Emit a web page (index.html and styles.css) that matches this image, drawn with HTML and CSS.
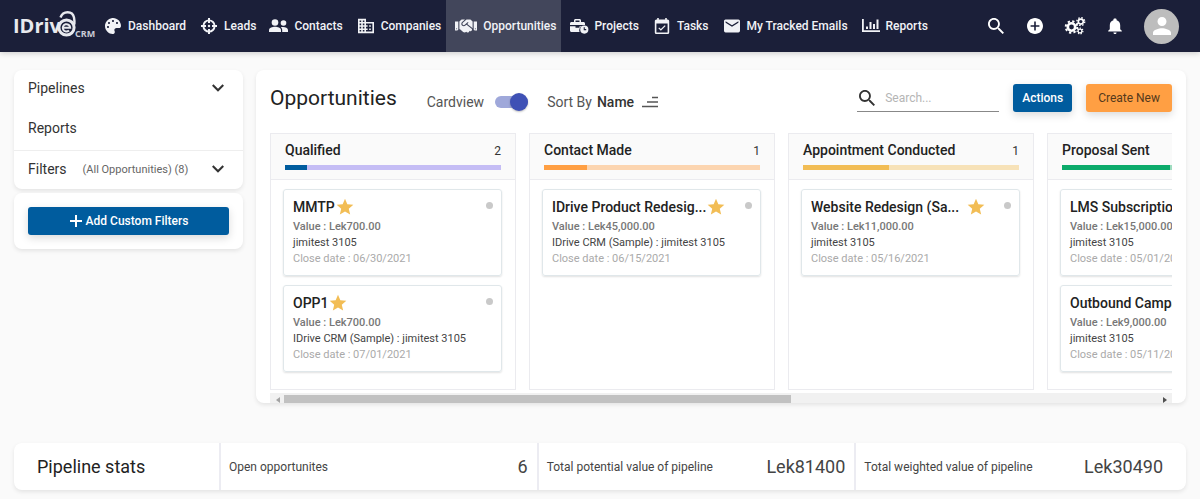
FILE: index.html
```html
<!DOCTYPE html>
<html lang="en">
<head>
<meta charset="utf-8">
<meta name="viewport" content="width=device-width, initial-scale=1">
<title>Opportunities - IDrive CRM</title>
<link rel="stylesheet" href="styles.css">
</head>
<body>
<svg class="defs" aria-hidden="true">
  <symbol id="chevron" viewBox="0 0 12 12"><path d="M1.500 3.500 6 8l4.500-4.500" fill="none" stroke="currentColor" stroke-width="1.800"/></symbol>
  <symbol id="star" viewBox="0 0 24 24"><path d="M12 17.270 18.180 21l-1.640-7.030L22 9.240l-7.190-.61L12 2 9.190 8.630 2 9.240l5.460 4.730L5.820 21z"/></symbol>
  <symbol id="search" viewBox="3 3 17.500 17.500"><path d="M15.500 14h-.79l-.28-.27C15.410 12.590 16 11.110 16 9.500 16 5.910 13.090 3 9.500 3S3 5.910 3 9.500 5.910 16 9.500 16c1.610 0 3.090-.59 4.230-1.570l.27.28v.79l5 4.990L20.490 19l-4.990-5zm-6 0C7.010 14 5 11.990 5 9.500S7.010 5 9.500 5 14 7.010 14 9.500 11.990 14 9.500 14z"/></symbol>
</svg>

<header class="topbar">
  <a class="logo" href="#" aria-label="IDrive CRM">
    <svg width="84" height="32" viewBox="0 0 84 32">
      <text class="logo-name" x="-1" y="24">IDriv</text>
      <path d="M46.500 8.500C49 1.500 58.500 1.500 60 8.500c.5 2.500.6 4 .4 7" fill="none" stroke="#e8e9ee" stroke-width="2.400"/>
      <circle cx="52.500" cy="18.500" r="7.600" fill="none" stroke="#e8e9ee" stroke-width="3"/>
      <path d="M49 18.700h7.200a3.700 3.700 0 1 0-1.200 2.900" fill="none" stroke="#e8e9ee" stroke-width="2"/>
      <text class="logo-crm" x="61" y="28">CRM</text>
    </svg>
  </a>
  <nav class="nav" aria-label="Main">
    <a href="#"><svg class="icon" viewBox="0 0 512 512"><path d="M204.300 5C104.900 24.400 24.800 104.300 5.200 203.400c-37 187 131.700 326.400 258.800 306.700 41.200-6.400 61.400-54.600 42.500-91.700-23.100-45.400 9.900-98.400 60.900-98.400h79.700c35.800 0 64.800-29.600 64.900-65.300C511.500 97.100 368.100-26.900 204.300 5zM96 320c-17.700 0-32-14.300-32-32s14.300-32 32-32 32 14.300 32 32-14.300 32-32 32zm32-128c-17.700 0-32-14.300-32-32s14.300-32 32-32 32 14.300 32 32-14.300 32-32 32zm128-64c-17.700 0-32-14.300-32-32s14.300-32 32-32 32 14.300 32 32-14.300 32-32 32zm128 64c-17.700 0-32-14.300-32-32s14.300-32 32-32 32 14.300 32 32-14.300 32-32 32z"/></svg>Dashboard</a>
    <a href="#"><svg class="icon" viewBox="0 0 16 16"><circle cx="8" cy="8" r="5.600" fill="none" stroke="currentColor" stroke-width="1.900"/><path d="M7 0h2v5H7zM7 11h2v5H7zM0 7h5v2H0zM11 7h5v2h-5z"/><circle cx="8" cy="8" r="1.200"/></svg>Leads</a>
    <a href="#"><svg class="icon wide" viewBox="0 0 20 16"><circle cx="6" cy="4.500" r="3.300"/><path d="M0 14v-1.800C0 9.600 3.500 8.800 6 8.800s6 .8 6 3.400V14z"/><circle cx="14.500" cy="5" r="2.800"/><path d="M13.200 14v-1.800c0-1.300-.6-2.300-1.500-3 3-.8 7.300.1 7.300 2.700V14z"/></svg>Contacts</a>
    <a href="#"><svg class="icon" viewBox="2 2 20 20"><path d="M12 7V3H2v18h20V7H12zM6 19H4v-2h2v2zm0-4H4v-2h2v2zm0-4H4V9h2v2zm0-4H4V5h2v2zm4 12H8v-2h2v2zm0-4H8v-2h2v2zm0-4H8V9h2v2zm0-4H8V5h2v2zm10 12h-8v-2h2v-2h-2v-2h2v-2h-2V9h8v10zm-2-8h-2v2h2v-2zm0 4h-2v2h2v-2z"/></svg>Companies</a>
    <a href="#" class="active" aria-current="page"><svg class="icon hands" viewBox="0 0 640 512"><path d="M434.700 64h-85.900c-8 0-15.700 3-21.600 8.400l-98.300 90c-.1.1-.2.3-.3.4-16.600 15.600-16.300 40.500-2.100 56 12.700 13.900 39.400 17.600 56.100 2.700.1-.1.3-.1.4-.2l79.900-73.200c6.500-5.900 16.700-5.500 22.600 1 6 6.500 5.500 16.600-1 22.600l-26.100 23.900L504 313.800c2.900 2.400 5.500 5 7.900 7.700V128l-54.600-54.600c-5.900-6-14.100-9.400-22.600-9.400zM544 128.200v223.900c0 17.700 14.300 32 32 32h64V128.200h-96zm48 223.900c-8.800 0-16-7.200-16-16s7.200-16 16-16 16 7.200 16 16-7.200 16-16 16zM0 384h64c17.700 0 32-14.300 32-32V128.200H0V384zm48-63.900c8.800 0 16 7.200 16 16s-7.200 16-16 16-16-7.200-16-16c0-8.900 7.200-16 16-16zm435.900 18.600L334.600 217.500l-30 27.500c-29.700 27.100-75.200 24.500-101.700-4.400-26.900-29.400-24.800-74.900 4.400-101.700L289.100 64h-83.800c-8.500 0-16.600 3.400-22.600 9.400L128 128v223.900h18.300l90.500 81.900c27.400 22.300 67.700 18.100 90-9.300l.2-.2 17.900 15.500c15.900 13 39.400 10.500 52.300-5.400l31.400-38.600 5.400 4.400c13.700 11.100 33.900 9.100 45-4.700l9.500-11.700c11.200-13.800 9.100-33.900-4.600-45.100z"/></svg>Opportunities</a>
    <a href="#"><svg class="icon wide" viewBox="0 0 20 16"><path d="M5 4V2.500C5 1.700 5.700 1 6.500 1h4c.8 0 1.500.7 1.500 1.500V4h2.500c.8 0 1.500.7 1.500 1.500V7H1V5.500C1 4.700 1.700 4 2.500 4zm1.500 0h4V2.500h-4zM1 8.200h5.500v1.500h4V8.200h2.200A5 5 0 0 0 10.500 14h-8C1.700 14 1 13.300 1 12.500z"/><path fill-rule="evenodd" d="M15.300 7.500a4.100 4.100 0 1 1 0 8.200 4.100 4.100 0 0 1 0-8.200zm-.6 1.700v3h2.500v-1.100h-1.400V9.200z"/></svg>Projects</a>
    <a href="#"><svg class="icon" viewBox="2 1 20 20"><path d="M16.530 11.060 15.470 10l-4.880 4.880-2.120-2.120-1.060 1.060L10.590 17l5.940-5.940zM19 3h-1V1h-2v2H8V1H6v2H5c-1.110 0-1.990.9-1.990 2L3 19c0 1.100.89 2 2 2h14c1.100 0 2-.9 2-2V5c0-1.100-.9-2-2-2zm0 16H5V8h14v11z"/></svg>Tasks</a>
    <a href="#"><svg class="icon" viewBox="2 2 20 20"><path d="M20 4H4c-1.100 0-1.990.9-1.990 2L2 18c0 1.100.9 2 2 2h16c1.100 0 2-.9 2-2V6c0-1.100-.9-2-2-2zm0 4-8 5-8-5V6l8 5 8-5v2z"/></svg>My Tracked Emails</a>
    <a href="#"><svg class="icon wide" viewBox="0 0 20 16"><path d="M1 1h1.800v11.200H19V14H1zM5 8.500h2V11H5zM8.500 4h2v7h-2zM12 6h2v5h-2zM15.500 1.500h2V11h-2z"/></svg>Reports</a>
  </nav>
  <div class="tools">
    <button aria-label="Search"><svg class="icon"><use href="#search"/></svg></button>
    <button aria-label="Add"><svg class="icon" viewBox="2 2 20 20"><path d="M12 2C6.480 2 2 6.480 2 12s4.480 10 10 10 10-4.480 10-10S17.520 2 12 2zm5.500 11H13v4.500h-2V13H6.500v-2H11V6.500h2V11h4.500z"/></svg></button>
    <button aria-label="Settings"><svg class="gears" viewBox="0 0 22 18" stroke="currentColor"><circle cx="7.500" cy="10" r="3.700" stroke-width="2.600"/><circle cx="7.500" cy="10" r="5.800" stroke-width="2" stroke-dasharray="2.280 2.275"/><circle cx="16.800" cy="4.600" r="2.500" stroke-width="1.600"/><circle cx="16.800" cy="4.600" r="3.900" stroke-width="1.400" stroke-dasharray="1.540 1.523"/><circle cx="16" cy="14" r="1.900" stroke-width="1.200"/><circle cx="16" cy="14" r="2.900" stroke-width="1.200" stroke-dasharray="1.300 1.303"/></svg></button>
    <button aria-label="Notifications"><svg class="icon bell" viewBox="3 2 18 20"><path d="M12 22c1.100 0 2-.9 2-2h-4c0 1.100.89 2 2 2zm6.500-6v-5c0-3.070-1.640-5.640-4.500-6.320V4c0-.83-.67-1.500-1.500-1.500h-1C10.670 2.500 10 3.170 10 4v.68C7.130 5.360 5.500 7.920 5.500 11v5l-2 2v1h17v-1z"/></svg></button>
    <button class="avatar" aria-label="Account"><svg viewBox="4 4 16 16"><path d="M12 12c2.210 0 4-1.790 4-4s-1.790-4-4-4-4 1.790-4 4 1.790 4 4 4zm0 2c-2.670 0-8 1.340-8 4v2h16v-2c0-2.660-5.330-4-8-4z"/></svg></button>
  </div>
</header>

<main class="page">
  <div class="workspace">
    <aside class="sidebar">
      <section class="panel side-menu">
        <button class="side-item">Pipelines <svg class="chevron"><use href="#chevron"/></svg></button>
        <button class="side-item">Reports</button>
        <button class="side-item filters">Filters <small>(All Opportunities) (8)</small><svg class="chevron"><use href="#chevron"/></svg></button>
      </section>
      <section class="panel side-action">
        <button class="btn primary full"><svg class="plus" viewBox="0 0 14 14"><path d="M6 1h2v5h5v2H8v5H6V8H1V6h5z"/></svg>Add Custom Filters</button>
      </section>
    </aside>

    <section class="panel board-panel">
      <div class="board-bar">
        <h1>Opportunities</h1>
        <label class="switch">Cardview <input type="checkbox" role="switch" checked></label>
        <button class="sort">Sort By <b>Name</b><svg viewBox="0 0 16 12"><path d="M10 1.500h6M5 6h11M0 10.500h16" stroke="currentColor" stroke-width="1.600"/></svg></button>
        <label class="search"><svg aria-label="Search"><use href="#search"/></svg><input type="text" placeholder="Search..."></label>
        <button class="btn primary">Actions</button>
        <button class="btn accent">Create New</button>
      </div>

      <div class="board">
        <section class="column">
          <header class="column-head"><h2>Qualified</h2><span>2</span><div class="meter blue"><i style="width:10%"></i></div></header>
          <article class="card"><h3><span>MMTP</span><svg><use href="#star"/></svg></h3><p class="value">Value : Lek700.00</p><p>jimitest 3105</p><p class="date">Close date : 06/30/2021</p></article>
          <article class="card"><h3><span>OPP1</span><svg><use href="#star"/></svg></h3><p class="value">Value : Lek700.00</p><p>IDrive CRM (Sample) : jimitest 3105</p><p class="date">Close date : 07/01/2021</p></article>
        </section>
        <section class="column">
          <header class="column-head"><h2>Contact Made</h2><span>1</span><div class="meter orange"><i style="width:20%"></i></div></header>
          <article class="card"><h3><span>IDrive Product Redesig...</span><svg><use href="#star"/></svg></h3><p class="value">Value : Lek45,000.00</p><p>IDrive CRM (Sample) : jimitest 3105</p><p class="date">Close date : 06/15/2021</p></article>
        </section>
        <section class="column">
          <header class="column-head"><h2>Appointment Conducted</h2><span>1</span><div class="meter yellow"><i style="width:40%"></i></div></header>
          <article class="card"><h3><span class="long">Website Redesign (Sa...</span><svg><use href="#star"/></svg></h3><p class="value">Value : Lek11,000.00</p><p>jimitest 3105</p><p class="date">Close date : 05/16/2021</p></article>
        </section>
        <section class="column">
          <header class="column-head"><h2>Proposal Sent</h2><span>2</span><div class="meter green"><i style="width:50%"></i></div></header>
          <article class="card"><h3><span>LMS Subscription</span></h3><p class="value">Value : Lek15,000.00</p><p>jimitest 3105</p><p class="date">Close date : 05/01/2021</p></article>
          <article class="card"><h3><span>Outbound Campaign</span></h3><p class="value">Value : Lek9,000.00</p><p>jimitest 3105</p><p class="date">Close date : 05/11/2021</p></article>
        </section>
      </div>
      <div class="scrollbar" aria-hidden="true">
        <svg class="arrow off" viewBox="0 0 14 10"><path d="M10 4v6L6 7z"/></svg>
        <div class="track"><i style="width:58%"></i></div>
        <svg class="arrow" viewBox="0 0 14 10"><path d="M5 4v6l4-3z"/></svg>
      </div>
    </section>
  </div>

  <section class="panel stats">
    <h2>Pipeline stats</h2>
    <div class="stat">Open opportunites <strong>6</strong></div>
    <div class="stat">Total potential value of pipeline <strong>Lek81400</strong></div>
    <div class="stat last">Total weighted value of pipeline <strong>Lek30490</strong></div>
  </section>
</main>
</body>
</html>
```
FILE: styles.css
```css
* { box-sizing: border-box; }
body {
  margin: 0;
  background: #fafafa;
  color: #333;
  font-family: Roboto, "Liberation Sans", sans-serif;
  font-size: 14px;
}
h1, h2, h3, p { margin: 0; font-weight: 400; }
button, input { font: inherit; color: inherit; }
button { border: 0; padding: 0; background: none; cursor: pointer; }
svg { fill: currentColor; flex: none; }
.defs { display: none; }

/* Top bar */
.topbar {
  display: flex;
  align-items: center;
  height: 52px;
  padding: 0 21px 0 14px;
  background: #1b1f39;
  color: #fff;
  box-shadow: 0 1px 6px rgba(0, 0, 0, .2);
}
.logo { display: flex; width: 81px; height: 34px; flex: none; }
.logo svg { overflow: visible; }
.logo-name { font: 700 20px "Open Sans", sans-serif; fill: #e8e9ee; }
.logo-crm { font: 700 9px "Open Sans", sans-serif; fill: #c8cad6; }
.nav { display: flex; height: 100%; }
.nav a {
  display: flex;
  align-items: center;
  gap: 5px;
  padding: 0 5px 0 8px;
  color: #f1f2f6;
  font-size: 12px;
  font-weight: 500;
  text-decoration: none;
  white-space: nowrap;
}
.nav .active { background: #42465b; }
.icon { width: 16px; height: 16px; margin: 0 2px; }
.icon.wide { width: 20px; margin: 0; }
.icon.hands { width: 22px; height: 18px; margin: 0 1px; }
.tools { display: flex; align-items: center; gap: 19px; margin-left: auto; }
.tools button { display: flex; }
.gears { width: 22px; height: 18px; fill: none; }
.tools .avatar {
  align-items: center;
  justify-content: center;
  width: 35px;
  height: 35px;
  border-radius: 50%;
  background: #bdbdbd;
}
.avatar svg { width: 18px; height: 18px; }

/* Page layout */
.page { padding: 18px 14px 9px; }
.workspace { display: flex; align-items: flex-start; gap: 13px; margin-bottom: 40px; }
.panel {
  background: #fff;
  border-radius: 8px;
  box-shadow: 0 2px 4px rgba(0, 0, 0, .09);
}

/* Sidebar */
.sidebar { flex: 0 0 229px; }
.side-menu { margin-bottom: 4px; }
.side-item {
  display: flex;
  align-items: center;
  width: 100%;
  height: 40px;
  padding: 0 18px 4px 14px;
  text-align: left;
}
.side-item.filters { height: 39px; border-top: 1px solid #eee; padding-bottom: 2px; }
.side-item small { margin-left: 16px; font-size: 11px; color: #666; }
.chevron { width: 14px; height: 14px; margin-left: auto; }
.side-action { padding: 14px; }

.btn {
  display: flex;
  align-items: center;
  justify-content: center;
  height: 28px;
  padding: 0 9px;
  border-radius: 3px;
  font-size: 12px;
  font-weight: 500;
  white-space: nowrap;
  box-shadow: 0 3px 8px rgba(0, 0, 0, .15);
}
.btn.primary { background: #005c9e; color: #fff; }
.btn.accent { margin-left: 14px; padding: 0 12px; background: #ff9f43; color: #54391c; font-weight: 400; }
.btn.full { width: 100%; }
.plus { width: 14px; height: 14px; margin-right: 3px; }

/* Board */
.board-panel { flex: 1; min-width: 0; padding: 14px 14px 0; overflow: hidden; }
.board-bar { display: flex; align-items: center; height: 28px; margin-bottom: 21px; white-space: nowrap; }
.board-bar h1 { margin-right: 30px; font-size: 21px; color: #222; }
.switch, .sort { display: flex; align-items: center; margin-top: 8px; color: #555; }
.switch { gap: 11px; margin-right: 19px; }
.switch input {
  appearance: none;
  display: flex;
  align-items: center;
  justify-content: flex-end;
  width: 33px;
  height: 12px;
  margin: 0;
  border-radius: 6px;
  background: #9fa8da;
}
.switch input::before {
  content: "";
  width: 18px;
  height: 18px;
  flex: none;
  border-radius: 50%;
  background: #3f51b5;
  box-shadow: 0 1px 2px rgba(0, 0, 0, .25);
}
.sort b { margin: 0 8px 0 5px; font-weight: 500; color: #333; }
.sort svg { width: 16px; height: 12px; }
.search {
  display: flex;
  align-items: center;
  width: 142px;
  height: 27px;
  margin: 0 14px 0 auto;
  padding-left: 2px;
  border-bottom: 1px solid #888;
}
.search svg { width: 16px; height: 16px; }
.search input { flex: 1; min-width: 0; border: 0; padding: 0; margin-left: 10px; outline: 0; background: none; font-size: 12px; }
.search input::placeholder { color: #b5b5b5; }

.board { display: flex; gap: 13px; overflow: hidden; }
.column { flex: 0 0 246px; min-height: 257px; border: 1px solid #ebebef; }
.column-head {
  display: grid;
  grid-template-columns: 1fr auto;
  align-items: center;
  row-gap: 5px;
  height: 46px;
  margin-bottom: 9px;
  padding: 6px 14px 9px;
  border-bottom: 1px solid #ebebef;
  background: #fafafa;
}
.column-head h2 { font-size: 14px; font-weight: 500; color: #222; line-height: 20px; }
.column-head span { padding-top: 2px; font-size: 12px; }
.meter { grid-column: 1 / -1; height: 5px; }
.meter i { display: block; height: 100%; }
.blue { background: #c5bdf5; }
.blue i { background: #005c9e; }
.orange { background: #fcd5b0; }
.orange i { background: #ff9f43; }
.yellow { background: #f7e2b8; }
.yellow i { background: #f2bd55; }
.green { background: #9fdcc0; }
.green i { background: #0cab6b; }

.card {
  position: relative;
  height: 87px;
  margin: 0 13px 9px 12px;
  padding: 7px 9px;
  border: 1px solid #e0e7ea;
  border-radius: 3px;
  box-shadow: 0 1px 2px rgba(0, 0, 0, .12);
  font-size: 11px;
  line-height: 16px;
  color: #444;
  white-space: nowrap;
}
.card::after {
  content: "";
  position: absolute;
  top: 12px;
  right: 8px;
  width: 7px;
  height: 7px;
  border-radius: 50%;
  background: #c9c9c9;
}
.card h3 { display: flex; align-items: center; height: 20px; margin-bottom: 2px; font-size: 14px; font-weight: 500; color: #222; }
.card h3 svg { width: 20px; height: 20px; color: #f2bd55; }
.long { margin-right: 7px; }
.card .value { font-weight: 500; color: #777; }
.card .date { color: #aaa; }

.scrollbar { display: flex; height: 10px; margin-top: 3px; background: #f1f1f1; }
.track { flex: 1; padding-top: 2px; }
.track i { display: block; height: 100%; background: #c1c1c1; }
.arrow { width: 14px; height: 10px; color: #505050; }
.arrow.off { color: #a3a3a3; }

/* Pipeline totals */
.stats { display: flex; align-items: center; height: 47px; }
.stats h2 { flex: 0 0 205px; padding-left: 23px; font-size: 18px; color: #222; }
.stat {
  display: flex;
  align-items: center;
  justify-content: space-between;
  flex: 1;
  height: 100%;
  padding: 0 9px 0 8px;
  border-left: 2px solid #ececf2;
  font-size: 12px;
  color: #444;
  white-space: nowrap;
}
.stat.last { padding-right: 23px; }
.stat strong { font-size: 18px; font-weight: 400; }
```
